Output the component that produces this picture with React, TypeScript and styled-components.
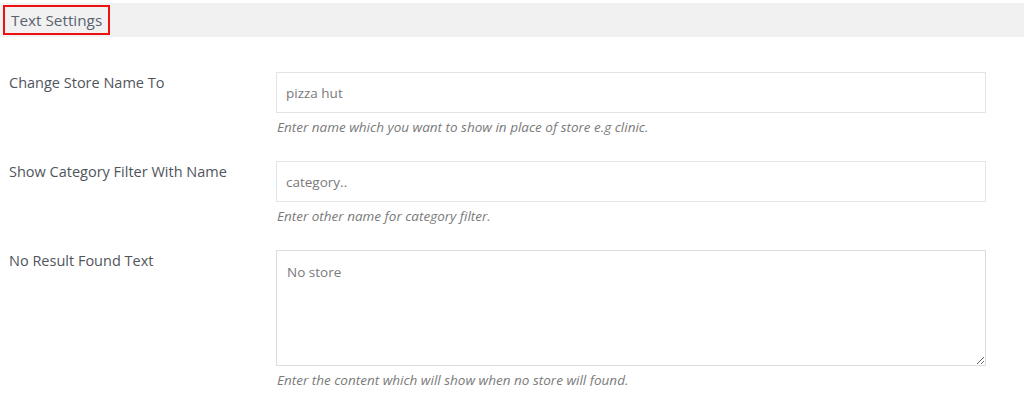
import React from "react";
import styled, { createGlobalStyle } from "styled-components";

const Global = createGlobalStyle`
  html, body { margin: 0; padding: 0; background: #fff; }
  body { font-family: "Open Sans", "Noto Sans", sans-serif; }
  * { box-sizing: border-box; }
`;

const Page = styled.div`
  width: 1024px;
  height: 386px;
  overflow: hidden;
  padding-top: 3px;
`;

const HeaderBar = styled.div`
  height: 34px;
  background: #f1f1f1;
  display: flex;
  align-items: center;
  padding-left: 3px;
`;

const Title = styled.h3`
  margin: 0;
  height: 30px;
  border: 2px solid #ee1111;
  padding: 0 6px;
  font-size: 15.3px;
  font-weight: 400;
  line-height: 26px;
  color: #5a6270;
`;

const Form = styled.div`
  display: flex;
  flex-direction: column;
  gap: 25px;
  padding-top: 35px;
`;

const Row = styled.div`
  display: grid;
  grid-template-columns: 276px 710px;
`;

const Label = styled.label`
  padding-left: 9px;
  padding-top: 1px;
  font-size: 14.5px;
  line-height: 20px;
  color: #50555c;
`;

const Field = styled.div`
  display: flex;
  flex-direction: column;
`;

const TextInput = styled.input`
  height: 41px;
  width: 100%;
  border: 1px solid #e4e4e4;
  padding: 0 9px;
  font-family: inherit;
  font-size: 13.5px;
  color: #7a7a7a;
  outline: none;
  background: #fff;
`;

const TextArea = styled.textarea`
  height: 116px;
  width: 100%;
  border: 1px solid #dcdcdc;
  padding: 11px 10px;
  font-family: inherit;
  font-size: 13.5px;
  line-height: 20px;
  color: #7a7a7a;
  outline: none;
  display: block;
  resize: vertical;
`;

const Hint = styled.p`
  margin: 5px 0 0 1px;
  font-size: 13.5px;
  line-height: 18px;
  font-style: italic;
  color: #7a7a7a;
`;

export default function App() {
  return (
    <>
      <Global />
      <Page>
        <HeaderBar>
          <Title>Text Settings</Title>
        </HeaderBar>
        <Form>
          <Row>
            <Label>Change Store Name To</Label>
            <Field>
              <TextInput defaultValue="pizza hut" />
              <Hint>Enter name which you want to show in place of store e.g clinic.</Hint>
            </Field>
          </Row>
          <Row>
            <Label>Show Category Filter With Name</Label>
            <Field>
              <TextInput defaultValue="category.." />
              <Hint>Enter other name for category filter.</Hint>
            </Field>
          </Row>
          <Row>
            <Label>No Result Found Text</Label>
            <Field>
              <TextArea defaultValue="No store" />
              <Hint>Enter the content which will show when no store will found.</Hint>
            </Field>
          </Row>
        </Form>
      </Page>
    </>
  );
}
